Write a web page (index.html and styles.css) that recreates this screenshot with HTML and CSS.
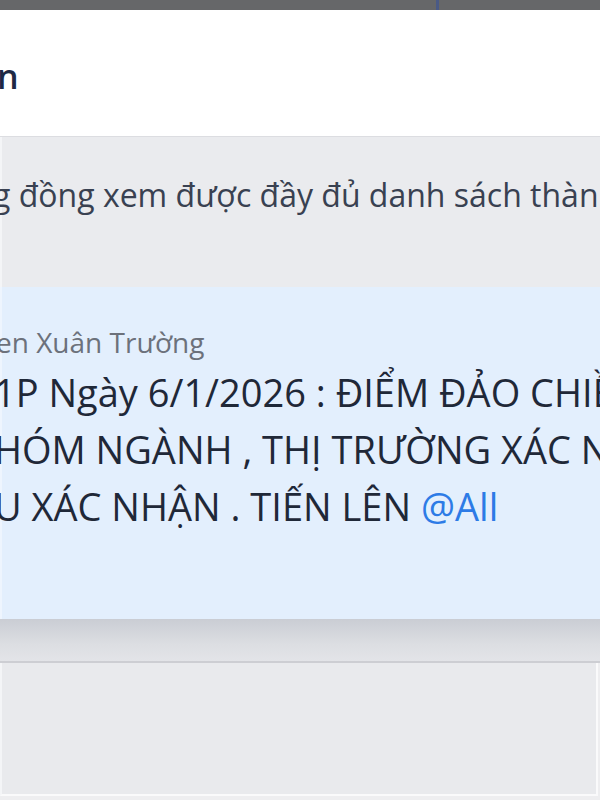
FILE: index.html
```html
<!DOCTYPE html>
<html lang="vi">
<head>
    <meta charset="UTF-8">
    <meta name="viewport" content="width=device-width, initial-scale=1.0">
    <title>Tin nhắn ghim</title>
    <link rel="stylesheet" href="styles.css">
</head>
<body>
    <div class="topbar"><span class="topbar-tick"></span></div>

    <div class="dialog">
        <div class="dialog-head">
            <h2 class="dialog-title">n</h2>
        </div>

        <div class="notice">
            <p class="notice-text">g đồng xem được đầy đủ danh sách thàn</p>
        </div>

        <div class="pinned">
            <p class="pinned-author">en Xuân Trường</p>
            <p class="pinned-line">1P Ngày 6/1/2026 : ĐIỂM ĐẢO CHIỀ</p>
            <p class="pinned-line">HÓM NGÀNH , THỊ TRƯỜNG XÁC N</p>
            <p class="pinned-line">U XÁC NHẬN . TIẾN LÊN <span class="mention">@All</span></p>
        </div>
        <div class="pinned-shadow"></div>

        <div class="dialog-body"></div>
    </div>
</body>
</html>
```

FILE: styles.css
```css
body {
    margin: 0;
    font-family: 'Open Sans', 'Noto Sans', sans-serif;
    background-color: #eeeef0;
    overflow: hidden;
}
p, h2 {
    margin: 0;
}
.topbar {
    height: 10px;
    background-color: #666769;
    position: relative;
}
.topbar-tick {
    position: absolute;
    left: 436px;
    top: 0;
    width: 3px;
    height: 10px;
    background-color: #4a5a86;
}
.dialog {
    width: 600px;
    overflow: hidden;
}
.dialog-head {
    height: 127px;
    background: white;
    border-bottom: 1px solid #dcdde1;
    box-sizing: border-box;
    padding-top: 41px;
}
.dialog-title {
    font-size: 34px;
    font-weight: 600;
    line-height: 50px;
    color: #1e2945;
    margin-left: -3px;
}
.notice {
    height: 150px;
    background-color: #eaebee;
    border-left: 2px solid #f4f5f7;
    box-sizing: border-box;
    padding-top: 37px;
    white-space: nowrap;
}
.notice-text {
    font-size: 32px;
    line-height: 42px;
    color: #394151;
    margin-left: -9px;
}
.pinned {
    height: 332px;
    background-color: #e3effd;
    border-left: 2px solid #eef5fe;
    box-sizing: border-box;
    padding-top: 34px;
    white-space: nowrap;
}
.pinned-author {
    font-size: 28px;
    line-height: 42px;
    color: #6c717b;
    margin-left: -6px;
}
.pinned-line {
    font-size: 38px;
    line-height: 57px;
    color: #1f2838;
    margin-left: -8px;
}
.pinned-author + .pinned-line {
    margin-top: 1px;
}
.mention {
    color: #2d7be6;
}
.pinned-shadow {
    height: 42px;
    background: linear-gradient(#cacdd4, #dcdee2 60%, #e3e4e8);
    border-bottom: 2px solid #cdced3;
}
.dialog-body {
    width: 594px;
    height: 131px;
    background-color: #e9eaed;
    border-left: 2px solid #f4f5f7;
    border-right: 2px solid #fafafb;
    border-bottom: 2px solid #fafafb;
}
```
